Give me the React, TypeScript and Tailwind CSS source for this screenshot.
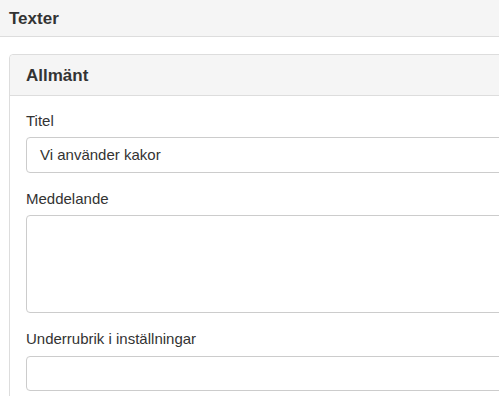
import React from "react";

export default function App() {
  const font = { fontFamily: '"Liberation Sans", Arial, sans-serif' };
  return (
    <div className="w-[499px] h-[396px] overflow-hidden bg-white text-[#333]" style={font}>
      <div className="h-[37px] bg-[#f5f5f5] border-b border-[#ddd] flex items-center pl-[9px]">
        <h1 className="text-[17px] font-bold leading-none">Texter</h1>
      </div>
      <div className="pt-[17px] pl-[9px]">
        <div className="w-[520px] border border-[#ddd] rounded-[4px] bg-white">
          <div className="h-[41px] bg-[#f5f5f5] border-b border-[#ddd] rounded-t-[4px] flex items-center pl-[16px]">
            <h2 className="text-[17px] font-bold leading-none">Allmänt</h2>
          </div>
          <div className="pl-[16px] pt-[15px] pb-[40px]">
            <div className="h-[20px] leading-[20px] text-[15px] mb-[6px]">Titel</div>
            <div className="h-[36px] border border-[#ccc] rounded-[4px] flex items-center pl-[13px] text-[15px] text-[#333]">
              Vi använder kakor
            </div>
            <div className="h-[20px] leading-[20px] text-[15px] mt-[16px] mb-[6px]">Meddelande</div>
            <div className="h-[98px] border border-[#ccc] rounded-[4px]"></div>
            <div className="h-[20px] leading-[20px] text-[15px] mt-[16px] mb-[7px]">Underrubrik i inställningar</div>
            <div className="h-[35px] border border-[#ccc] rounded-[4px]"></div>
          </div>
        </div>
      </div>
    </div>
  );
}
